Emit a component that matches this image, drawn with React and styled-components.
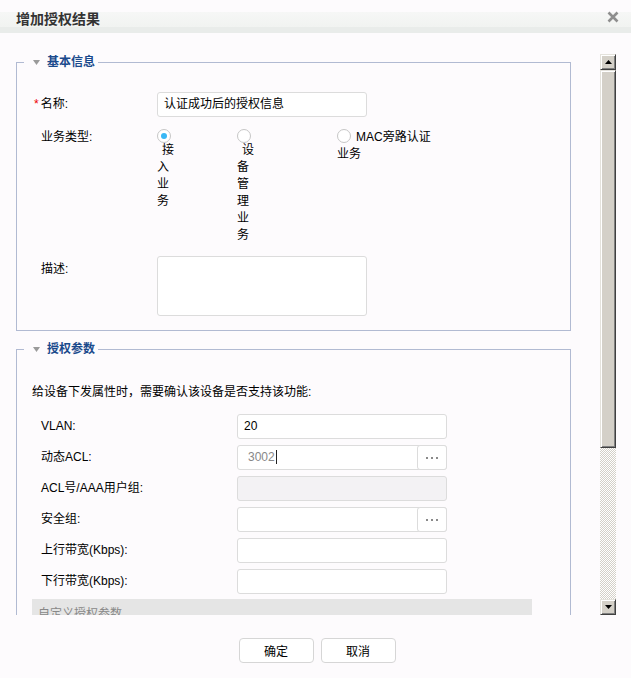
import styled, { createGlobalStyle } from 'styled-components'

const GlobalStyle = createGlobalStyle`
  html, body {
    margin: 0;
    padding: 0;
    background: #fdfbfd;
  }
  body {
    font-family: "Liberation Sans", "Noto Sans CJK SC", sans-serif;
    font-size: 12px;
    color: #000;
  }
`

const Dialog = styled.div`
  width: 631px;
  height: 678px;
  padding-top: 12px;
  box-sizing: border-box;
  display: flex;
  flex-direction: column;
`

const TitleBar = styled.div`
  height: 21px;
  display: flex;
  justify-content: space-between;
  align-items: flex-start;
  padding: 0 12px 0 16px;
  background: linear-gradient(to bottom, #f6f7f6 0, #f1f3f1 15px, #e9ecea 15px, #e9ecea 100%);
`

const Title = styled.h1`
  margin: 0;
  font-size: 14px;
  line-height: 14px;
  font-weight: bold;
  color: #333;
`

const Close = styled.svg`
  margin-top: -1px;
  display: block;
`

const Body = styled.div`
  display: flex;
  padding: 21px 15px 0 0;
`

const ScrollArea = styled.div`
  flex: 1;
  height: 561px;
  overflow: hidden;
`

const Group = styled.fieldset`
  width: 555px;
  box-sizing: border-box;
  margin: ${p => p.$top || 0}px 0 0 16px;
  padding: 0;
  min-width: 0;
  border: 1px solid #b1bad2;
`

const Legend = styled.legend`
  margin-left: 7px;
  padding: 0 3px 0 9px;
  line-height: 16px;
  font-weight: bold;
  color: #1a4a8c;
  white-space: nowrap;

  svg {
    display: inline-block;
    vertical-align: 1px;
    margin-right: 7px;
  }
`

const GroupBody = styled.div`
  padding: ${p => p.$pad};
`

const Row = styled.div`
  display: flex;
  align-items: ${p => (p.$center ? 'center' : 'flex-start')};
  margin-top: ${p => p.$gap || 0}px;
`

const Label = styled.div`
  width: ${p => p.$w}px;
  flex: none;
  box-sizing: border-box;
  line-height: 17px;
  padding-top: ${p => p.$pt || 0}px;
  padding-left: ${p => p.$indent || 0}px;
  white-space: nowrap;
`

const Star = styled.span`
  color: #e00;
  margin-right: 2px;
`

const RadioGroup = styled.div`
  display: grid;
  grid-template-columns: 80px 100px 98px;
  line-height: 17px;
`

const Option = styled.div`
  width: ${p => p.$wrap}px;
`

const Radio = styled.span`
  display: ${p => (p.$block ? 'block' : 'inline-block')};
  vertical-align: top;
  margin-bottom: ${p => (p.$block ? -1 : 0)}px;
  width: 14px;
  height: 14px;
  box-sizing: border-box;
  border: 1px solid #c6c6c6;
  border-radius: 50%;
  background: #fff;
  position: relative;

  &::after {
    content: '';
    display: ${p => (p.$checked ? 'block' : 'none')};
    position: absolute;
    left: 3px;
    top: 3px;
    width: 6px;
    height: 6px;
    border-radius: 50%;
    background: #38b7f5;
  }
`

const OptionText = styled.span`
  padding-left: 5px;
`

const Field = styled.div`
  width: 210px;
  height: ${p => p.$h || 25}px;
  box-sizing: border-box;
  border: 1px solid #dcdcdc;
  border-radius: 3px;
  background: ${p => (p.$disabled ? '#f3f2f4' : '#fff')};
  display: flex;
  align-items: ${p => (p.$h ? 'flex-start' : 'center')};
`

const FieldText = styled.span`
  padding-left: ${p => p.$pad || 6}px;
  color: ${p => p.$muted ? '#888' : '#000'};
  line-height: 17px;
  white-space: nowrap;
`

const Caret = styled.span`
  display: inline-block;
  width: 1px;
  height: 14px;
  margin-left: 1px;
  background: #222;
  vertical-align: -3px;
`

const PickButton = styled.div`
  width: 30px;
  height: 25px;
  box-sizing: border-box;
  margin: -1px -1px -1px auto;
  border: 1px solid #dcdcdc;
  border-radius: 3px;
  background: #fff;
  display: flex;
  align-items: center;
  justify-content: center;
`

const Intro = styled.div`
  line-height: 17px;
`

const FieldRows = styled.div`
  display: flex;
  flex-direction: column;
  gap: 6px;
  margin-top: 13px;
`

const SubBar = styled.div`
  width: 500px;
  margin-top: 5px;
  padding: 7px 6px 6px;
  box-sizing: border-box;
  line-height: 17px;
  background: #e5e5e5;
  color: #888;
`

const ScrollBar = styled.div`
  width: 16px;
  height: 561px;
  flex: none;
  display: flex;
  flex-direction: column;
`

const ScrollPiece = styled.div`
  width: 16px;
  height: ${p => p.$h || 16}px;
  flex: none;
  box-sizing: border-box;
  background: #d4d0c8;
  border: 1px solid;
  border-color: #e4e2dc #404040 #404040 #e4e2dc;
  box-shadow: inset 1px 1px #fff, inset -1px -1px #808080;
  display: flex;
  align-items: center;
  justify-content: center;
`

const ScrollTrack = styled.div`
  flex: 1;
  background-image: repeating-conic-gradient(#d4d0c8 0% 25%, #ffffff 0% 50%);
  background-size: 2px 2px;
`

const Footer = styled.div`
  display: flex;
  justify-content: center;
  gap: 7px;
  padding: 23px 0 0 3px;
`

const Button = styled.button`
  width: 75px;
  height: 25px;
  border: 1px solid #d6d6d6;
  border-radius: 4px;
  background: #fff;
  font: inherit;
  color: #000;
  padding: 0;
`

const Triangle = () => (
  <svg width="7" height="5" viewBox="0 0 7 5">
    <polygon points="0,0 7,0 3.5,5" fill="#9a9a9a" />
  </svg>
)

const Dots = () => (
  <svg width="12" height="2" viewBox="0 0 12 2">
    <rect x="0" y="0" width="2" height="2" fill="#8a8a8a" />
    <rect x="5" y="0" width="2" height="2" fill="#8a8a8a" />
    <rect x="10" y="0" width="2" height="2" fill="#8a8a8a" />
  </svg>
)

const Arrow = ({ down }) => (
  <svg width="7" height="4" viewBox="0 0 7 4">
    <polygon points={down ? '0,0 7,0 3.5,4' : '0,4 7,4 3.5,0'} fill="#000" />
  </svg>
)

const params = [
  { label: 'VLAN:', value: '20' },
  { label: '动态ACL:', value: '3002', muted: true, caret: true, pick: true },
  { label: 'ACL号/AAA用户组:', disabled: true },
  { label: '安全组:', pick: true },
  { label: '上行带宽(Kbps):' },
  { label: '下行带宽(Kbps):' },
]

export default function App() {
  return (
    <>
      <GlobalStyle />
      <Dialog>
        <TitleBar>
          <Title>增加授权结果</Title>
          <Close width="12" height="12" viewBox="0 0 12 12">
            <path d="M1.5 1.5 L10.5 10.5 M10.5 1.5 L1.5 10.5" stroke="#8e8e8e" strokeWidth="2.6" />
          </Close>
        </TitleBar>

        <Body>
          <ScrollArea>
            <Group>
              <Legend><Triangle />基本信息</Legend>
              <GroupBody $pad="22px 0 14px 17px">
                <Row>
                  <Label $w={123} $pt={4}><Star>*</Star>名称:</Label>
                  <Field>
                    <FieldText>认证成功后的授权信息</FieldText>
                  </Field>
                </Row>
                <Row $gap={12}>
                  <Label $w={123} $indent={7}>业务类型:</Label>
                  <RadioGroup>
                    <Option $wrap={18}>
                      <Radio $block $checked />
                      <OptionText>接入业务</OptionText>
                    </Option>
                    <Option $wrap={18}>
                      <Radio $block />
                      <OptionText>设备管理业务</OptionText>
                    </Option>
                    <Option $wrap={98}>
                      <Radio />
                      <OptionText>MAC旁路认证业务</OptionText>
                    </Option>
                  </RadioGroup>
                </Row>
                <Row $gap={12}>
                  <Label $w={123} $pt={5} $indent={7}>描述:</Label>
                  <Field $h={60} />
                </Row>
              </GroupBody>
            </Group>

            <Group $top={10}>
              <Legend><Triangle />授权参数</Legend>
              <GroupBody $pad="27px 0 60px 15px">
                <Intro>给设备下发属性时，需要确认该设备是否支持该功能:</Intro>
                <FieldRows>
                  {params.map(p => (
                    <Row key={p.label} $center>
                      <Label $w={205} $indent={9}>{p.label}</Label>
                      <Field $disabled={p.disabled}>
                        {p.value && (
                          <FieldText $pad={p.muted ? 10 : 6} $muted={p.muted}>
                            {p.value}
                            {p.caret && <Caret />}
                          </FieldText>
                        )}
                        {p.pick && (
                          <PickButton><Dots /></PickButton>
                        )}
                      </Field>
                    </Row>
                  ))}
                </FieldRows>
                <SubBar>自定义授权参数</SubBar>
              </GroupBody>
            </Group>
          </ScrollArea>

          <ScrollBar>
            <ScrollPiece><Arrow /></ScrollPiece>
            <ScrollPiece $h={378} />
            <ScrollTrack />
            <ScrollPiece><Arrow down /></ScrollPiece>
          </ScrollBar>
        </Body>

        <Footer>
          <Button>确定</Button>
          <Button>取消</Button>
        </Footer>
      </Dialog>
    </>
  )
}
